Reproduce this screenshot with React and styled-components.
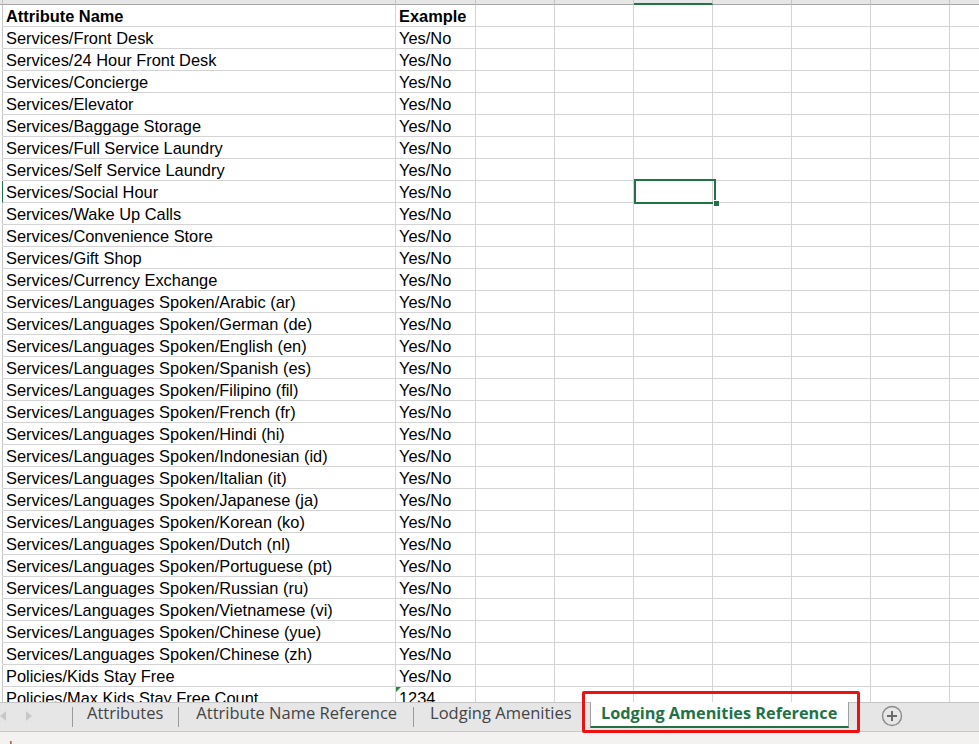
import React from "react";
import styled, { createGlobalStyle } from "styled-components";

const Global = createGlobalStyle`
  html, body { margin: 0; padding: 0; background: #fff; overflow: hidden; }
  body { font-family: "Liberation Sans", Arial, sans-serif; }
`;

const COLS = [393, 80, 79, 79, 79, 79, 79, 79, 40];
const GRID = `3px ${COLS.map((c) => c + "px").join(" ")}`;

const Window = styled.div`
  width: 979px;
  height: 744px;
  display: flex;
  flex-direction: column;
  overflow: hidden;
  position: relative;
`;

const Sheet = styled.div`
  height: 702px;
  overflow: hidden;
  display: flex;
  flex-direction: column;
`;

const HeaderStrip = styled.div`
  display: grid;
  grid-template-columns: ${GRID};
  height: 5px;
  flex: none;
`;

const HeadCell = styled.div`
  box-sizing: border-box;
  height: 5px;
  background: #e6e6e6;
  border-bottom: 1px solid ${(p) => (p.$active ? "#217346" : "#a6a6a6")};
  border-right: 1px solid ${(p) => (p.$last ? "transparent" : "#c6c6c6")};
  ${(p) => p.$active && "border-bottom-width: 2px;"}
`;

const Row = styled.div`
  display: grid;
  grid-template-columns: ${GRID};
  height: 22px;
  flex: none;
`;

const RowStub = styled.div`
  box-sizing: border-box;
  height: 22px;
  background: #fff;
  border-right: 1px solid ${(p) => (p.$active ? "#217346" : "#c6c6c6")};
  border-bottom: 1px solid #fff;
`;

const Cell = styled.div`
  position: relative;
  box-sizing: border-box;
  height: 22px;
  padding: 2px 0 0 3px;
  line-height: 18px;
  font-size: 16.4px;
  font-weight: ${(p) => (p.$bold ? 700 : 400)};
  color: #000;
  white-space: nowrap;
  border-right: 1px solid #d4d4d4;
  border-bottom: 1px solid #d4d4d4;
  overflow: visible;
`;

const TextFlag = styled.span`
  position: absolute;
  left: 0;
  top: 0;
  width: 0;
  height: 0;
  border-top: 5px solid #1f8a3d;
  border-right: 5px solid transparent;
`;

const Selection = styled.div`
  position: absolute;
  left: 0;
  top: -2px;
  width: 82px;
  height: 25px;
  box-sizing: border-box;
  border: 2px solid #217346;
  pointer-events: none;
  z-index: 2;
`;

const FillHandle = styled.div`
  position: absolute;
  left: 77px;
  top: 19px;
  width: 5px;
  height: 5px;
  background: #217346;
  border: 1px solid #fff;
  border-right: none;
  border-bottom: none;
`;

const TabBar = styled.div`
  box-sizing: border-box;
  height: 30px;
  flex: none;
  background: #e6e6e6;
  border-top: 1px solid #c6c6c6;
  border-bottom: 1px solid #c8c8c8;
  display: flex;
  align-items: stretch;
  font-family: "Open Sans", "Noto Sans", sans-serif;
`;

const NavArrows = styled.div`
  width: 72px;
  display: flex;
  align-items: center;
  gap: 20px;
  box-sizing: border-box;
  padding-bottom: 3px;
`;

const Arrow = styled.span`
  width: 0;
  height: 0;
  border-top: 5px solid transparent;
  border-bottom: 5px solid transparent;
  ${(p) =>
    p.$dir === "left"
      ? "border-right: 6px solid #c8c8c8;"
      : "border-left: 6px solid #c8c8c8;"}
`;

const Sep = styled.span`
  width: 1px;
  background: #9a9a9a;
  margin: 4px 0 4px;
  align-self: stretch;
`;

const Tab = styled.div`
  display: flex;
  align-items: center;
  padding: 0 ${(p) => p.$r}px 9px ${(p) => p.$l}px;
  font-size: 16.5px;
  line-height: 20px;
  color: #444;
  white-space: nowrap;
`;

const ActiveTab = styled.div`
  margin-left: 18px;
  margin-top: -1px;
  box-sizing: border-box;
  width: 259px;
  height: 26px;
  background: #fff;
  border-left: 1px solid #a0a0a0;
  border-right: 1px solid #a0a0a0;
  border-bottom: 2px solid #217346;
  display: flex;
  align-items: center;
  justify-content: center;
  font-size: 16.3px;
  line-height: 20px;
  font-weight: 700;
  color: #217346;
  white-space: nowrap;
  padding-bottom: 2px;
`;

const AddButton = styled.div`
  margin-left: 32px;
  display: flex;
  align-items: center;
  padding-bottom: 2px;
`;

const Highlight = styled.div`
  position: absolute;
  left: 582px;
  top: 691px;
  width: 278px;
  height: 42px;
  box-sizing: border-box;
  border: 3px solid #ee1111;
  border-radius: 2px;
  pointer-events: none;
`;

const StatusBar = styled.div`
  flex: 1;
  background: #f3f2f1;
  font-family: "Open Sans", "Noto Sans", sans-serif;
  font-size: 13px;
  color: #333;
  padding-top: 5px;
  overflow: hidden;
`;

const StatusText = styled.span`
  display: inline-block;
  margin-left: -18px;
`;

const rows = [
  ["Attribute Name", "Example", true],
  ["Services/Front Desk", "Yes/No"],
  ["Services/24 Hour Front Desk", "Yes/No"],
  ["Services/Concierge", "Yes/No"],
  ["Services/Elevator", "Yes/No"],
  ["Services/Baggage Storage", "Yes/No"],
  ["Services/Full Service Laundry", "Yes/No"],
  ["Services/Self Service Laundry", "Yes/No"],
  ["Services/Social Hour", "Yes/No"],
  ["Services/Wake Up Calls", "Yes/No"],
  ["Services/Convenience Store", "Yes/No"],
  ["Services/Gift Shop", "Yes/No"],
  ["Services/Currency Exchange", "Yes/No"],
  ["Services/Languages Spoken/Arabic (ar)", "Yes/No"],
  ["Services/Languages Spoken/German (de)", "Yes/No"],
  ["Services/Languages Spoken/English (en)", "Yes/No"],
  ["Services/Languages Spoken/Spanish (es)", "Yes/No"],
  ["Services/Languages Spoken/Filipino (fil)", "Yes/No"],
  ["Services/Languages Spoken/French (fr)", "Yes/No"],
  ["Services/Languages Spoken/Hindi (hi)", "Yes/No"],
  ["Services/Languages Spoken/Indonesian (id)", "Yes/No"],
  ["Services/Languages Spoken/Italian (it)", "Yes/No"],
  ["Services/Languages Spoken/Japanese (ja)", "Yes/No"],
  ["Services/Languages Spoken/Korean (ko)", "Yes/No"],
  ["Services/Languages Spoken/Dutch (nl)", "Yes/No"],
  ["Services/Languages Spoken/Portuguese (pt)", "Yes/No"],
  ["Services/Languages Spoken/Russian (ru)", "Yes/No"],
  ["Services/Languages Spoken/Vietnamese (vi)", "Yes/No"],
  ["Services/Languages Spoken/Chinese (yue)", "Yes/No"],
  ["Services/Languages Spoken/Chinese (zh)", "Yes/No"],
  ["Policies/Kids Stay Free", "Yes/No"],
  ["Policies/Max Kids Stay Free Count", "1234", false, true],
];

const SELECTED_ROW = 8;
const SELECTED_COL = 4; // column E

const PlusIcon = () => (
  <svg width="22" height="22" viewBox="0 0 22 22">
    <circle cx="11" cy="11" r="9.5" fill="none" stroke="#8a8a8a" strokeWidth="1.4" />
    <path d="M11 6v10M6 11h10" stroke="#6a6a6a" strokeWidth="2" />
  </svg>
);

export default function App() {
  return (
    <Window>
      <Global />
      <Sheet>
        <HeaderStrip>
          <HeadCell />
          {COLS.map((_, i) => (
            <HeadCell key={i} $active={i === SELECTED_COL} $last={i === COLS.length - 1} />
          ))}
        </HeaderStrip>
        {rows.map(([a, b, bold, flag], r) => (
          <Row key={r}>
            <RowStub $active={r === SELECTED_ROW} />
            <Cell $bold={bold}>{a}</Cell>
            <Cell $bold={bold}>
              {flag && <TextFlag />}
              {b}
            </Cell>
            {COLS.slice(2).map((_, c) => (
              <Cell key={c}>
                {r === SELECTED_ROW && c + 2 === SELECTED_COL && (
                  <Selection>
                    <FillHandle />
                  </Selection>
                )}
              </Cell>
            ))}
          </Row>
        ))}
      </Sheet>
      <TabBar>
        <NavArrows>
          <Arrow $dir="left" />
          <Arrow $dir="right" />
        </NavArrows>
        <Sep />
        <Tab $l={14} $r={15}>Attributes</Tab>
        <Sep />
        <Tab $l={17} $r={16}>Attribute Name Reference</Tab>
        <Sep />
        <Tab $l={16} $r={0}>Lodging Amenities</Tab>
        <ActiveTab>Lodging Amenities Reference</ActiveTab>
        <AddButton>
          <PlusIcon />
        </AddButton>
      </TabBar>
      <StatusBar>
        <StatusText>Ready</StatusText>
      </StatusBar>
      <Highlight />
    </Window>
  );
}
